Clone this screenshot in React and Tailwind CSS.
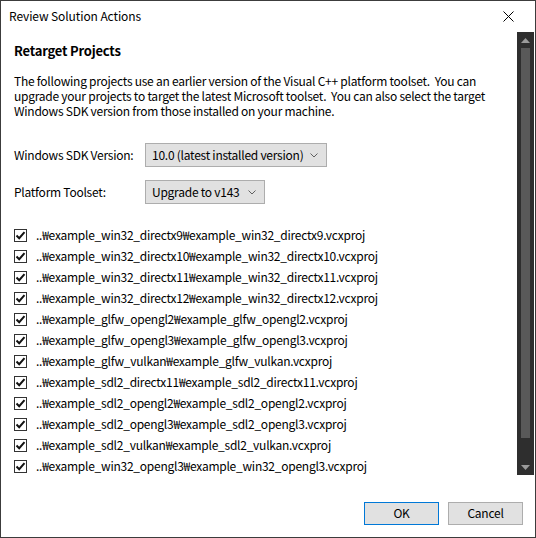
import React from "react";

const projects = [
  "..₩example_win32_directx9₩example_win32_directx9.vcxproj",
  "..₩example_win32_directx10₩example_win32_directx10.vcxproj",
  "..₩example_win32_directx11₩example_win32_directx11.vcxproj",
  "..₩example_win32_directx12₩example_win32_directx12.vcxproj",
  "..₩example_glfw_opengl2₩example_glfw_opengl2.vcxproj",
  "..₩example_glfw_opengl3₩example_glfw_opengl3.vcxproj",
  "..₩example_glfw_vulkan₩example_glfw_vulkan.vcxproj",
  "..₩example_sdl2_directx11₩example_sdl2_directx11.vcxproj",
  "..₩example_sdl2_opengl2₩example_sdl2_opengl2.vcxproj",
  "..₩example_sdl2_opengl3₩example_sdl2_opengl3.vcxproj",
  "..₩example_sdl2_vulkan₩example_sdl2_vulkan.vcxproj",
  "..₩example_win32_opengl3₩example_win32_opengl3.vcxproj",
];

function Chevron() {
  return (
    <svg width="8" height="5" viewBox="0 0 8 5" className="shrink-0">
      <path d="M0.5 0.5 L4 4 L7.5 0.5" fill="none" stroke="#606060" strokeWidth="1" />
    </svg>
  );
}

function Check() {
  return (
    <div className="w-[13px] h-[13px] border border-[#333333] bg-white flex items-center justify-center shrink-0">
      <svg width="11" height="11" viewBox="0 0 11 11">
        <path d="M1.5 5.5 L4.2 8.2 L9.5 2.2" fill="none" stroke="#111111" strokeWidth="2" />
      </svg>
    </div>
  );
}

export default function App() {
  return (
    <div
      className="w-[536px] h-[538px] bg-white border border-[#3c3c3c] flex flex-col text-black text-[12px] leading-[15px] tracking-[-0.25px]"
      style={{ fontFamily: '"Noto Sans CJK KR", "Noto Sans", sans-serif' }}
    >
      {/* Title bar */}
      <div className="h-[31px] flex items-center justify-between pl-[8px] pr-[21px] shrink-0">
        <span className="text-[12px] tracking-[-0.1px] pb-[3px]">Review Solution Actions</span>
        <svg width="11" height="11" viewBox="0 0 11 11" className="mb-[1px]">
          <path d="M0.5 0.5 L10.5 10.5 M10.5 0.5 L0.5 10.5" stroke="#000" strokeWidth="1" />
        </svg>
      </div>

      <div className="flex flex-1 min-h-0">
        {/* Main column */}
        <div className="flex-1 flex flex-col pl-[13px] min-w-0">
          <div className="mt-[11px] text-[13px] leading-[16px] font-bold tracking-[-0.2px]">Retarget Projects</div>
          <p className="mt-[14px] w-[484px]">
            The following projects use an earlier version of the Visual C++ platform toolset.&nbsp; You can
            upgrade your projects to target the latest Microsoft toolset.&nbsp; You can also select the target
            Windows SDK version from those installed on your machine.
          </p>

          <div className="mt-[25px] flex items-center">
            <span className="w-[131px] pb-[2px]">Windows SDK Version:</span>
            <div className="h-[24px] w-[182px] border border-[#adadad] bg-[#e1e1e1] flex items-center justify-between pl-[6px] pr-[8px]">
              <span className="whitespace-nowrap pb-[2px]">10.0 (latest installed version)</span>
              <Chevron />
            </div>
          </div>

          <div className="mt-[13px] flex items-center">
            <span className="w-[131px] pb-[2px]">Platform Toolset:</span>
            <div className="h-[24px] w-[120px] border border-[#adadad] bg-[#e1e1e1] flex items-center justify-between pl-[6px] pr-[8px]">
              <span className="whitespace-nowrap pb-[2px]">Upgrade to v143</span>
              <Chevron />
            </div>
          </div>

          <div className="mt-[21px] flex flex-col">
            {projects.map((p) => (
              <div key={p} className="h-[21px] flex items-center">
                <Check />
                <span className="ml-[9px] whitespace-nowrap pb-[2px]">{p}</span>
              </div>
            ))}
          </div>
        </div>

        {/* Scrollbar */}
        <div className="w-[30px] flex flex-col shrink-0">
          <div className="ml-[12px] w-[17px] h-[443px] bg-[#2e2e2e] flex flex-col items-center">
            <div className="h-[16px] w-full flex items-center justify-center">
              <svg width="9" height="5" viewBox="0 0 9 5">
                <path d="M0 5 L4.5 0 L9 5 Z" fill="#9a9a9a" />
              </svg>
            </div>
            <div className="w-[9px] h-[390px] bg-[#595959]" />
            <div className="flex-1" />
            <div className="h-[16px] w-full flex items-center justify-center">
              <svg width="9" height="5" viewBox="0 0 9 5">
                <path d="M0 0 L9 0 L4.5 5 Z" fill="#9a9a9a" />
              </svg>
            </div>
          </div>
        </div>
      </div>

      {/* Buttons */}
      <div className="shrink-0 flex justify-end gap-[9px] pr-[12px] pb-[12px]">
        <button className="w-[75px] h-[23px] border border-[#0078d7] bg-[#e1e1e1] text-[12px] leading-none pb-[2px]">
          OK
        </button>
        <button className="w-[75px] h-[23px] border border-[#adadad] bg-[#e1e1e1] text-[12px] leading-none pb-[2px]">
          Cancel
        </button>
      </div>
    </div>
  );
}
